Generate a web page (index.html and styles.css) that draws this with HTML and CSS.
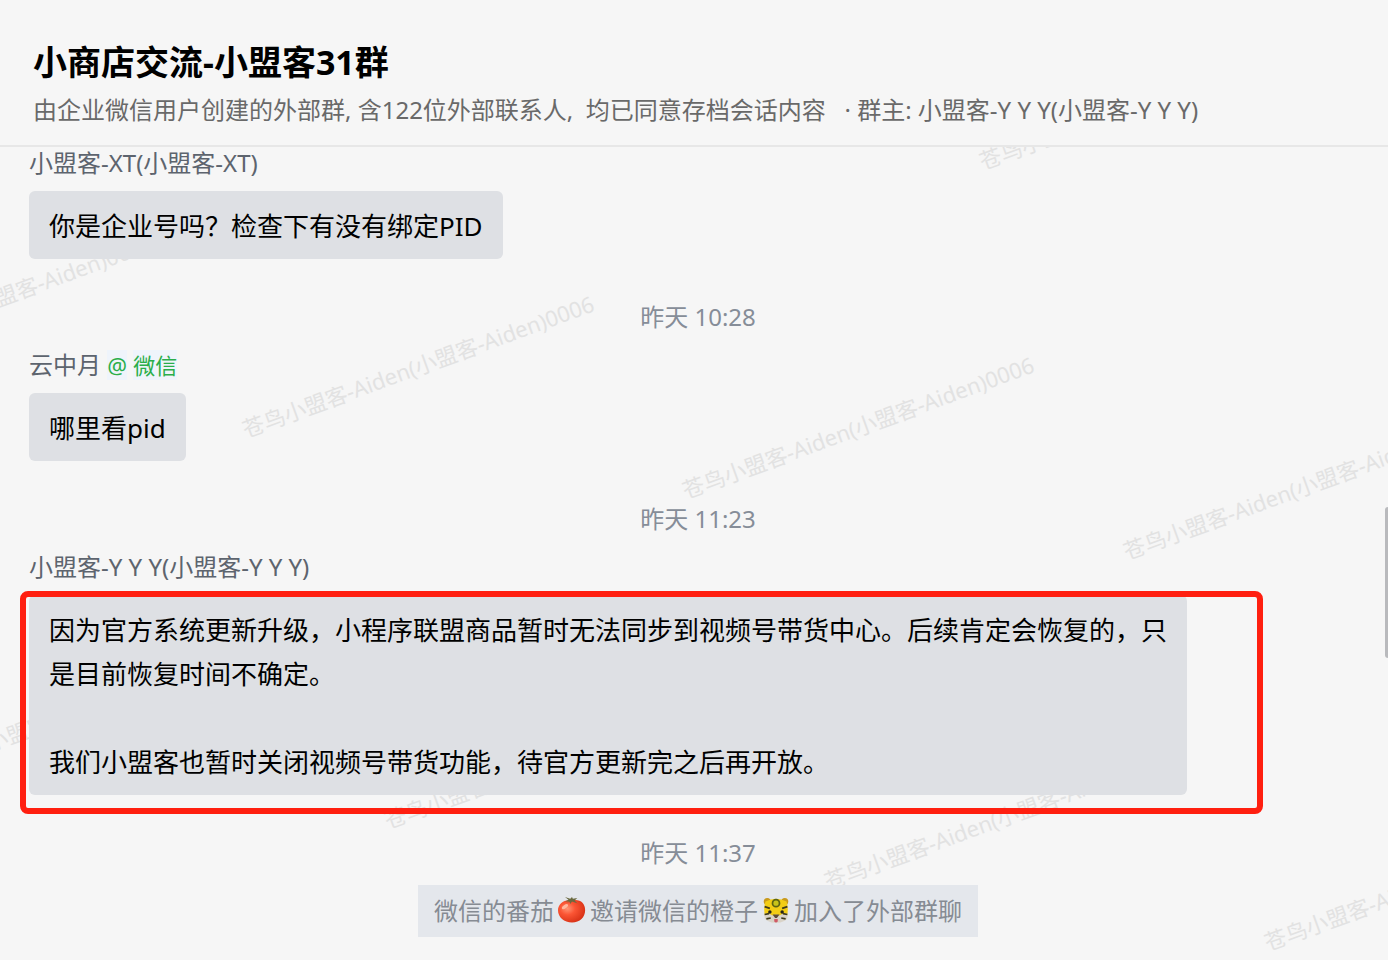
FILE: index.html
```html
<!DOCTYPE html>
<html lang="zh-CN">
<head>
    <meta charset="UTF-8">
    <meta name="viewport" content="width=device-width, initial-scale=1.0">
    <title>小商店交流-小盟客31群</title>
    <link rel="stylesheet" href="styles.css">
</head>
<body>
    <header class="chat-header">
        <h1>小商店交流-小盟客31群</h1>
        <p>由企业微信用户创建的外部群, 含122位外部联系人,&nbsp; 均已同意存档会话内容&nbsp;&nbsp; · 群主: 小盟客-Y Y Y(小盟客-Y Y Y)</p>
    </header>
    <main class="chat">
        <svg class="watermark" aria-hidden="true">
            <text transform="translate(983 23) rotate(-20)">苍鸟小盟客-Aiden(小盟客-Aiden)0006</text>
            <text transform="translate(-194 230) rotate(-20)">苍鸟小盟客-Aiden(小盟客-Aiden)0006</text>
            <text transform="translate(246 291) rotate(-20)">苍鸟小盟客-Aiden(小盟客-Aiden)0006</text>
            <text transform="translate(686 352) rotate(-20)">苍鸟小盟客-Aiden(小盟客-Aiden)0006</text>
            <text transform="translate(1127 413) rotate(-20)">苍鸟小盟客-Aiden(小盟客-Aiden)0006</text>
            <text transform="translate(-52 620) rotate(-20)">苍鸟小盟客-Aiden(小盟客-Aiden)0006</text>
            <text transform="translate(388 682) rotate(-20)">苍鸟小盟客-Aiden(小盟客-Aiden)0006</text>
            <text transform="translate(828 743) rotate(-20)">苍鸟小盟客-Aiden(小盟客-Aiden)0006</text>
            <text transform="translate(1268 804) rotate(-20)">苍鸟小盟客-Aiden(小盟客-Aiden)0006</text>
        </svg>

        <section class="message">
            <div class="sender">小盟客-XT(小盟客-XT)</div>
            <div class="bubble">你是企业号吗？检查下有没有绑定PID</div>
        </section>

        <time class="time">昨天 10:28</time>
        <section class="message">
            <div class="sender">云中月 <span class="source">@</span> <span class="source">微信</span></div>
            <div class="bubble">哪里看pid</div>
        </section>

        <time class="time">昨天 11:23</time>
        <section class="message highlighted">
            <div class="sender">小盟客-Y Y Y(小盟客-Y Y Y)</div>
            <div class="bubble">因为官方系统更新升级，小程序联盟商品暂时无法同步到视频号带货中心。后续肯定会恢复的，只是目前恢复时间不确定。<br><br>我们小盟客也暂时关闭视频号带货功能，待官方更新完之后再开放。</div>
        </section>

        <time class="time">昨天 11:37</time>
        <div class="notice">
            <span>微信的番茄</span>
            <svg class="emoji" viewBox="0 0 32 32" role="img" aria-label="番茄">
                <defs>
                    <radialGradient id="tomato" cx="35%" cy="38%" r="70%">
                        <stop offset="0" stop-color="#ff9474"/>
                        <stop offset="0.4" stop-color="#fb5534"/>
                        <stop offset="1" stop-color="#d63015"/>
                    </radialGradient>
                </defs>
                <path d="M16 4C25 2 31 7 31 15c0 8-6 14-15 14S0 23 0 15C0 8 7 2 16 4z" fill="url(#tomato)"/>
                <path d="M14 5L8 5l4-2-4-3 6 2 2-2 1 2 5-1-3 3 3 3-6-2-2 3-1-3-4 2z" fill="#6b6a40"/>
                <ellipse cx="8" cy="11" rx="4" ry="2" fill="#ffb89e" transform="rotate(-35 8 11)"/>
            </svg>
            <span>邀请微信的橙子</span>
            <svg class="emoji" viewBox="0 0 32 32" role="img" aria-label="老虎">
                <circle cx="6" cy="5" r="4" fill="#c99a1c"/>
                <circle cx="26" cy="5" r="4" fill="#c99a1c"/>
                <path d="M4 5Q16-1 28 5q3 9 0 19H4Q1 14 4 5z" fill="#f3cd15"/>
                <path d="M3 19q5-1 9 2l4-1 4 1q4-3 9-2 1 6-3 8-10 5-20 0-4-2-3-8z" fill="#d9d3c8"/>
                <circle cx="16" cy="7" r="4" fill="#c8c41a" stroke="#5d6412" stroke-width="2"/>
                <path d="M3 11l6 2M29 11l-6 2M3 20l5-1M29 20l-5-1M5 25l5-1M27 25l-5-1" fill="none" stroke="#3f3a1c" stroke-width="2"/>
                <circle cx="9" cy="17" r="2" fill="#25231d"/>
                <circle cx="23" cy="17" r="2" fill="#25231d"/>
                <path d="M12 20h8l-3 4h-2z" fill="#5c4a38"/>
                <path d="M14 25h4v3q-2 2-4 0z" fill="#cf5a66"/>
            </svg>
            <span>加入了外部群聊</span>
        </div>
        <div class="scroll-thumb"></div>
    </main>
</body>
</html>
```

FILE: styles.css
```css
* {
    box-sizing: border-box;
}
body {
    font-family: "Noto Sans", "Noto Sans CJK SC", sans-serif;
    margin: 0;
    min-height: 100vh;
    display: flex;
    flex-direction: column;
    background-color: #f6f6f6;
    color: #000;
}
.chat-header {
    padding: 38px 33px 11px;
    border-bottom: 2px solid #e7e7e7;
}
.chat-header h1 {
    margin: 0;
    font-size: 34px;
    line-height: 48px;
}
.chat-header p {
    margin: 0;
    font-size: 24px;
    line-height: 48px;
    color: #696969;
}
.chat {
    position: relative;
    flex: 1;
    display: flex;
    flex-direction: column;
    padding: 0 21px 20px 29px;
}
.watermark {
    position: absolute;
    top: 0;
    left: 0;
    width: 100%;
    height: 100%;
    overflow: hidden;
    font-size: 22px;
    fill: #e2e2e2;
}
.message {
    position: relative;
    display: flex;
    flex-direction: column;
    align-items: flex-start;
    gap: 12px;
}
.sender {
    font-size: 24px;
    line-height: 32px;
    color: #5d646e;
}
.source {
    font-size: 22px;
    color: #2aae4a;
    background-color: #eff4fb;
}
.bubble {
    max-width: calc(100% - 180px);
    padding: 13px 20px 11px;
    border-radius: 6px;
    background-color: #dee0e4;
    font-size: 26px;
    line-height: 44px;
}
/* red marker drawn around the bubble */
.highlighted::after {
    content: "";
    position: absolute;
    top: 40px;
    right: 104px;
    bottom: -19px;
    left: -9px;
    border: 6px solid #ff1f10;
    border-radius: 8px;
}
.time {
    position: relative;
    margin: 42px 0 16px;
    text-align: center;
    font-size: 24px;
    line-height: 32px;
    color: #868d98;
}
.notice {
    position: relative;
    align-self: center;
    display: flex;
    align-items: center;
    gap: 3px;
    padding: 0 16px;
    background-color: #e4e7ec;
    font-size: 24px;
    line-height: 52px;
    color: #868b93;
}
.emoji {
    width: 30px;
    height: 28px;
}
.scroll-thumb {
    position: absolute;
    top: 360px;
    right: 0;
    width: 3px;
    height: 151px;
    border-radius: 3px 0 0 3px;
    background-color: #b9babd;
}
```
